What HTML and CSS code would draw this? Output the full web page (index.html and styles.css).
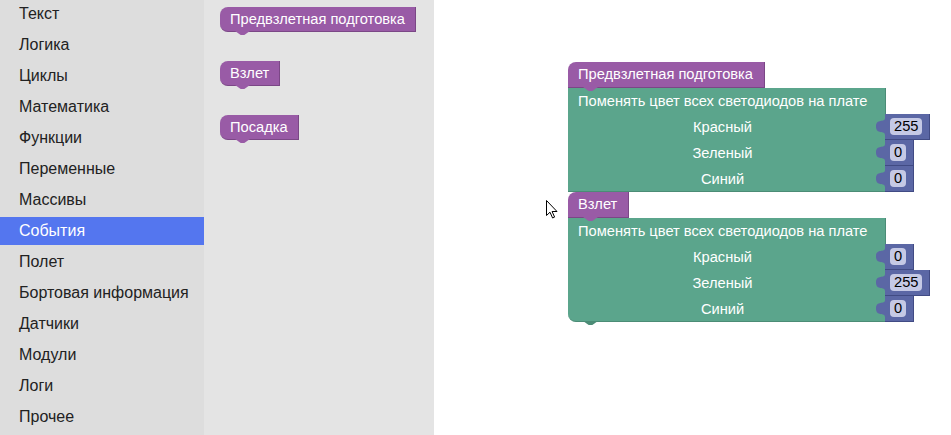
FILE: index.html
```html
<!DOCTYPE html>
<html lang="ru">
<head>
<meta charset="utf-8">
<title>Blockly</title>
<link rel="stylesheet" href="styles.css">
</head>
<body>
<div class="app">
  <nav class="toolbox">
    <div class="cat">Текст</div>
    <div class="cat">Логика</div>
    <div class="cat">Циклы</div>
    <div class="cat">Математика</div>
    <div class="cat">Функции</div>
    <div class="cat">Переменные</div>
    <div class="cat">Массивы</div>
    <div class="cat sel">События</div>
    <div class="cat">Полет</div>
    <div class="cat">Бортовая информация</div>
    <div class="cat">Датчики</div>
    <div class="cat">Модули</div>
    <div class="cat">Логи</div>
    <div class="cat">Прочее</div>
  </nav>
  <aside class="flyout">
    <div class="ev fblock">Предвзлетная подготовка</div>
    <div class="ev fblock">Взлет</div>
    <div class="ev fblock">Посадка</div>
  </aside>
  <main class="ws">
    <div class="stack">
      <div class="ev hdr">Предвзлетная подготовка</div>
      <div class="led">
        <div class="row title">Поменять цвет всех светодиодов на плате</div>
        <div class="row"><span class="lbl">Красный</span><span class="val"><svg class="tab" viewBox="0 0 10 17"><path d="M10,0 L10,17 L9,17 C9,12 0,17 0,8.5 C0,0 9,5 9,0 Z"/></svg><span class="fld">255</span></span></div>
        <div class="row"><span class="lbl">Зеленый</span><span class="val"><svg class="tab" viewBox="0 0 10 17"><path d="M10,0 L10,17 L9,17 C9,12 0,17 0,8.5 C0,0 9,5 9,0 Z"/></svg><span class="fld">0</span></span></div>
        <div class="row"><span class="lbl">Синий</span><span class="val"><svg class="tab" viewBox="0 0 10 17"><path d="M10,0 L10,17 L9,17 C9,12 0,17 0,8.5 C0,0 9,5 9,0 Z"/></svg><span class="fld">0</span></span></div>
      </div>
      <div class="ev hdr">Взлет</div>
      <div class="led last">
        <div class="row title">Поменять цвет всех светодиодов на плате</div>
        <div class="row"><span class="lbl">Красный</span><span class="val"><svg class="tab" viewBox="0 0 10 17"><path d="M10,0 L10,17 L9,17 C9,12 0,17 0,8.5 C0,0 9,5 9,0 Z"/></svg><span class="fld">0</span></span></div>
        <div class="row"><span class="lbl">Зеленый</span><span class="val"><svg class="tab" viewBox="0 0 10 17"><path d="M10,0 L10,17 L9,17 C9,12 0,17 0,8.5 C0,0 9,5 9,0 Z"/></svg><span class="fld">255</span></span></div>
        <div class="row"><span class="lbl">Синий</span><span class="val"><svg class="tab" viewBox="0 0 10 17"><path d="M10,0 L10,17 L9,17 C9,12 0,17 0,8.5 C0,0 9,5 9,0 Z"/></svg><span class="fld">0</span></span></div>
      </div>
    </div>
    <svg class="cursor" viewBox="0 0 12 19" width="12" height="19"><path d="M0.5,0.5 L0.5,15.5 L4,12.2 L6.6,18 L8.6,17.1 L6.1,11.5 L11,11.5 Z" fill="#fff" stroke="#000" stroke-width="1" stroke-linejoin="round"/></svg>
  </main>
</div>
</body>
</html>
```
FILE: styles.css
```css
* { box-sizing: border-box; }
body {
  margin: 0;
  font-family: "Liberation Sans", Arial, sans-serif;
  background: #fff;
}
.app {
  display: flex;
  width: 951px;
  height: 435px;
  overflow: hidden;
  background: #fff;
}
.toolbox {
  flex: 0 0 204px;
  background: #dddddd;
  display: flex;
  flex-direction: column;
  gap: 3px;
}
.cat {
  height: 28px;
  line-height: 28px;
  padding-left: 19px;
  font-size: 16px;
  color: #222;
  white-space: nowrap;
}
.cat.sel {
  background: #5476ef;
  color: #fff;
}
.flyout {
  flex: 0 0 230px;
  background: #e4e4e4;
  display: flex;
  flex-direction: column;
  align-items: flex-start;
  gap: 29px;
  padding: 7px 0 0 16px;
}
.ev {
  position: relative;
  background: #995ba6;
  color: #fff;
  font-size: 14.67px;
  white-space: nowrap;
  border-bottom: 1px solid #7b4786;
  border-right: 1px solid #7b4786;
}
.ev::after {
  content: "";
  position: absolute;
  left: 15px;
  top: 100%;
  width: 15px;
  height: 4px;
  background: #995ba6;
  clip-path: polygon(0 0, 100% 0, 62% 100%, 38% 100%);
}
.fblock {
  height: 25px;
  line-height: 24px;
  padding: 0 10px;
  border-radius: 8px 0 0 8px;
}
.ws {
  flex: 1;
  position: relative;
}
.stack {
  position: absolute;
  left: 134px;
  top: 62px;
  display: flex;
  flex-direction: column;
  align-items: flex-start;
}
.hdr {
  z-index: 2;
  height: 26px;
  line-height: 25px;
  padding: 0 11px 0 10px;
  border-radius: 8px 0 0 0;
}
.led {
  position: relative;
  width: 318px;
  background: #5ba58c;
  color: #fff;
  font-size: 14.67px;
  border-right: 1px solid #4b8c76;
  border-bottom: 1px solid #4b8c76;
}
.led.last {
  border-radius: 0 0 0 8px;
}
.led.last::after {
  content: "";
  position: absolute;
  left: 15px;
  top: 100%;
  width: 15px;
  height: 4px;
  background: #4b8c76;
  clip-path: polygon(0 0, 100% 0, 62% 100%, 38% 100%);
}
.row {
  display: flex;
  align-items: center;
  height: 26px;
  white-space: nowrap;
}
.led .row:last-child { height: 25px; }
.title {
  padding-left: 10px;
  height: 26px;
}
.lbl {
  flex: 0 0 309px;
  text-align: center;
}
.val {
  position: relative;
  flex-shrink: 0;
  margin-left: 8px;
  display: flex;
  align-items: center;
  height: 26px;
  padding: 0 7px 0 5px;
  background: #5b67a5;
  border-right: 1px solid #414b84;
  border-bottom: 1px solid #414b84;
  color: #000;
}
.tab {
  position: absolute;
  left: -9px;
  top: 4px;
  width: 10px;
  height: 17px;
  fill: #5b67a5;
}
.fld {
  height: 17px;
  line-height: 17px;
  padding: 0 4px;
  border-radius: 4px;
  background: #c5c9e5;
  font-size: 14.67px;
}
.cursor {
  position: absolute;
  left: 112px;
  top: 200px;
}
```
